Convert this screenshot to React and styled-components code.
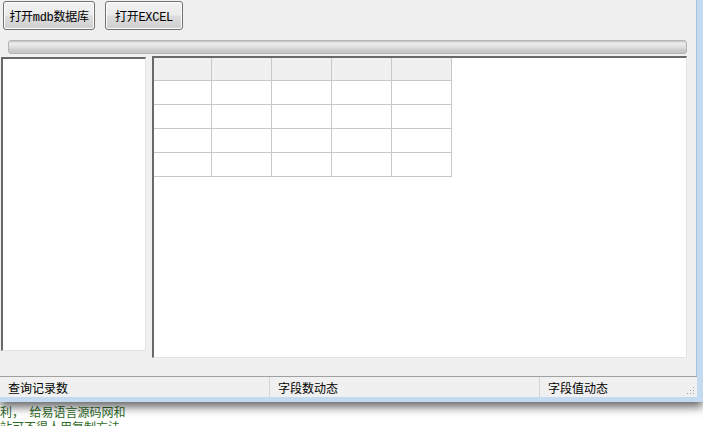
import React from "react";
import styled, { createGlobalStyle } from "styled-components";

const GlobalStyle = createGlobalStyle`
  html, body {
    margin: 0;
    padding: 0;
    background: #ffffff;
    overflow: hidden;
  }
`;

const Page = styled.div`
  width: 703px;
  height: 426px;
  display: flex;
  flex-direction: column;
  font-family: "SimSun", "Noto Sans CJK SC", sans-serif;
  font-size: 12px;
  color: #000;
  overflow: hidden;
`;

const Window = styled.div`
  display: flex;
  width: 703px;
  height: 402px;
  box-shadow: 0 5px 9px rgba(0, 0, 0, 0.6);
  position: relative;
  z-index: 1;
`;

const Frame = styled.div`
  display: flex;
  flex-direction: column;
  width: 697px;
  height: 397px;
  background: #f0f0f0;
  border-right: 6px solid #c3daf0;
  border-bottom: 5px solid #c3daf0;
  box-shadow: inset -1px -1px 0 #a9c4e0;
`;

const Toolbar = styled.div`
  display: flex;
  gap: 10px;
  padding: 1px 0 0 3px;
  height: 29px;
`;

const Button = styled.button`
  width: ${(p) => p.$w}px;
  height: 29px;
  border: 1px solid #707070;
  border-radius: 3px;
  background: linear-gradient(#f2f2f2 0%, #ebebeb 48%, #dddddd 52%, #cfcfcf 100%);
  box-shadow: inset 0 0 0 1px #fcfcfc;
  font-family: "Liberation Mono", "Noto Sans CJK SC", monospace;
  font-size: 12px;
  letter-spacing: -0.3px;
  color: #000;
  padding: 0;
`;

const Progress = styled.div`
  margin: 10px 0 0 8px;
  width: 679px;
  height: 14px;
  box-sizing: border-box;
  border: 1px solid #b2b2b2;
  border-radius: 3px;
  background: linear-gradient(#c8c8c8 0%, #ececec 20%, #e0e0e0 50%, #cccccc 75%, #c4c4c4 100%);
`;

const Panels = styled.div`
  display: flex;
  gap: 6px;
  margin-top: 2px;
  padding-left: 1px;
  height: 302px;
  align-items: flex-start;
`;

const Sunken = styled.div`
  box-sizing: border-box;
  width: ${(p) => p.$w}px;
  height: ${(p) => p.$h}px;
  margin-top: ${(p) => p.$top || 0}px;
  background: #fff;
  border-top: 2px solid #696969;
  border-left: 2px solid #696969;
  border-right: 1px solid #e3e3e3;
  border-bottom: 1px solid #e3e3e3;
`;

const Grid = styled.div`
  display: grid;
  grid-template-columns: 58px repeat(4, 60px);
  grid-template-rows: 23px repeat(4, 24px);
  width: 298px;
`;

const Cell = styled.div`
  box-sizing: border-box;
  border-right: 1px solid #c8c8c8;
  border-bottom: 1px solid #c8c8c8;
  background: ${(p) => (p.$head ? "#f0f0f0" : "#ffffff")};
`;

const StatusBar = styled.div`
  margin-top: auto;
  height: 21px;
  box-sizing: border-box;
  border-top: 1px solid #a0a0a0;
  display: flex;
  align-items: center;
  background: #f0f0f0;
  position: relative;
`;

const StatusPane = styled.div`
  width: ${(p) => p.$w}px;
  height: 100%;
  box-sizing: border-box;
  display: flex;
  align-items: center;
  padding-left: 8px;
  border-right: ${(p) => (p.$sep ? "1px solid #d5d5d5" : "none")};
  font-size: 12px;
`;

const Grip = styled.svg`
  position: absolute;
  right: 2px;
  bottom: 2px;
`;

const Below = styled.div`
  flex: 1;
  font-family: "Noto Sans CJK SC", sans-serif;
  font-size: 12px;
  line-height: 15px;
  color: #2d6b26;
  padding-top: 2px;
  white-space: pre;
`;

const cells = Array.from({ length: 25 }, (_, i) => i);

export default function App() {
  return (
    <Page>
      <GlobalStyle />
      <Window>
        <Frame>
          <Toolbar>
            <Button $w={92}>打开mdb数据库</Button>
            <Button $w={78}>打开EXCEL</Button>
          </Toolbar>
          <Progress />
          <Panels>
            <Sunken $w={145} $h={294} $top={1} />
            <Sunken $w={535} $h={302}>
              <Grid>
                {cells.map((i) => (
                  <Cell key={i} $head={i < 5} />
                ))}
              </Grid>
            </Sunken>
          </Panels>
          <StatusBar>
            <StatusPane $w={270} $sep>查询记录数</StatusPane>
            <StatusPane $w={270} $sep>字段数动态</StatusPane>
            <StatusPane $w={150}>字段值动态</StatusPane>
            <Grip width="10" height="10" viewBox="0 0 10 10">
              <rect x="8" y="2" width="1" height="1" fill="#a0a0a0" />
              <rect x="5" y="5" width="1" height="1" fill="#a0a0a0" />
              <rect x="8" y="5" width="1" height="1" fill="#a0a0a0" />
              <rect x="2" y="8" width="1" height="1" fill="#a0a0a0" />
              <rect x="5" y="8" width="1" height="1" fill="#a0a0a0" />
              <rect x="8" y="8" width="1" height="1" fill="#a0a0a0" />
            </Grip>
          </StatusBar>
        </Frame>
      </Window>
      <Below>{"利，  给易语言源码网和\n站可不得人用复制方法"}</Below>
    </Page>
  );
}
